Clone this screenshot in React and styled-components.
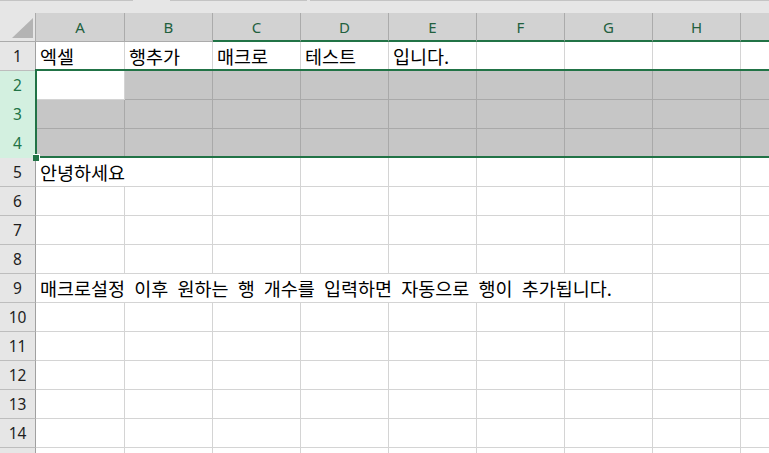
import React from "react";
import styled, { createGlobalStyle } from "styled-components";

const GREEN = "#217346";
const ROW_H = 29;
const HEAD_H = 29;

const Global = createGlobalStyle`
  html, body { margin: 0; padding: 0; background: #ffffff; }
  body { width: 769px; height: 453px; overflow: hidden; }
  #root { width: 769px; height: 453px; overflow: hidden; }
`;

const Page = styled.div`
  width: 769px;
  height: 453px;
  overflow: hidden;
  background: #ffffff;
  display: flex;
  flex-direction: column;
`;

const TopStrip = styled.div`
  height: 13px;
  flex: 0 0 13px;
  background: #e6e6e6;
  display: flex;
  align-items: flex-start;
`;

const StripEdge = styled.div`
  height: 0;
  border-top: 1px solid #c4c4c4;
  width: ${(p) => (p.$w ? `${p.$w}px` : "auto")};
  flex: ${(p) => (p.$w ? "0 0 auto" : "1 1 auto")};
  margin-left: ${(p) => p.$gap || 0}px;
`;

const Sheet = styled.div`
  position: relative;
  display: grid;
  grid-template-columns: 36px 89px repeat(7, 88px) 88px;
  grid-template-rows: ${HEAD_H}px;
  grid-auto-rows: ${ROW_H}px;
  font-family: "Noto Sans CJK KR", "Noto Sans", sans-serif;
`;

const Corner = styled.div`
  position: relative;
  box-sizing: border-box;
  background: #e6e6e6;
  border-right: 1px solid #ababab;
  border-bottom: 1px solid #ababab;
`;

const CornerMark = styled.svg`
  position: absolute;
  left: 12px;
  top: 5px;
`;

const ColHead = styled.div`
  box-sizing: border-box;
  background: #d2d2d2;
  border-right: 1px solid #ababab;
  border-bottom: ${(p) => (p.$accent ? `2px solid ${GREEN}` : "1px solid #ababab")};
  display: flex;
  align-items: center;
  justify-content: center;
  padding-top: ${(p) => (p.$accent ? "1px" : "0")};
  font-family: "Noto Sans", "Open Sans", sans-serif;
  font-size: 15px;
  color: #22603e;
`;

const RowHead = styled.div`
  box-sizing: border-box;
  background: ${(p) => (p.$sel ? "#d3f0e0" : "#e6e6e6")};
  border-right: 1px solid #a0a0a0;
  border-bottom: 1px solid ${(p) => (p.$sel ? "#d3f0e0" : "#bdbdbd")};
  display: flex;
  align-items: center;
  justify-content: center;
  font-family: "Noto Sans", "Open Sans", sans-serif;
  font-size: 15.5px;
  color: ${(p) => (p.$sel ? GREEN : "#1e1e1e")};
`;

const Cell = styled.div`
  box-sizing: border-box;
  grid-column: span ${(p) => p.$span || 1};
  background: ${(p) => (p.$sel ? "#c6c6c6" : "#ffffff")};
  border-right: 1px solid ${(p) => (p.$sel ? "#a9a9a9" : "#d4d4d4")};
  border-bottom: 1px solid ${(p) => (p.$sel ? "#a9a9a9" : "#d4d4d4")};
  display: flex;
  align-items: center;
  padding: 0 0 0 4px;
  white-space: nowrap;
  overflow: visible;
  font-family: "Noto Sans CJK KR", "Noto Sans", sans-serif;
  font-size: 18.5px;
  word-spacing: 5px;
  color: #000000;
`;

const Selection = styled.div`
  position: absolute;
  left: 35px;
  top: ${HEAD_H + ROW_H - 2}px;
  right: -20px;
  height: ${ROW_H * 3 + 2}px;
  box-sizing: border-box;
  border: 2px solid ${GREEN};
  pointer-events: none;
`;

const FillHandle = styled.div`
  position: absolute;
  left: 33px;
  top: ${HEAD_H + ROW_H * 4 - 4}px;
  width: 7px;
  height: 7px;
  box-sizing: border-box;
  background: ${GREEN};
  border-top: 1px solid #ffffff;
  border-right: 1px solid #ffffff;
  pointer-events: none;
`;

const COLS = ["A", "B", "C", "D", "E", "F", "G", "H", ""];
const ACCENT_FROM = 2;

const ROWS = [
  { n: 1, cells: [{ t: "엑셀" }, { t: "행추가" }, { t: "매크로" }, { t: "테스트" }, { t: "입니다." }] },
  { n: 2, sel: true },
  { n: 3, sel: true },
  { n: 4, sel: true },
  { n: 5, cells: [{ t: "안녕하세요", span: 2 }] },
  { n: 6 },
  { n: 7 },
  { n: 8 },
  {
    n: 9,
    cells: [{ t: "매크로설정 이후 원하는 행 개수를 입력하면 자동으로 행이 추가됩니다.", span: 7 }],
  },
  { n: 10 },
  { n: 11 },
  { n: 12 },
  { n: 13 },
  { n: 14 },
  { n: 15, hideNum: true },
];

function buildCells(row) {
  const out = [];
  const given = row.cells || [];
  let col = 0;
  given.forEach((c, i) => {
    out.push(
      <Cell key={`c${i}`} $span={c.span}>
        {c.t}
      </Cell>
    );
    col += c.span || 1;
  });
  while (col < COLS.length) {
    const sel = row.sel && !(row.n === 2 && col === 0);
    out.push(<Cell key={`e${col}`} $sel={sel} />);
    col += 1;
  }
  return out;
}

export default function App() {
  return (
    <Page>
      <Global />
      <TopStrip>
        <StripEdge $w={133} />
        <StripEdge $w={137} $gap={37} />
        <StripEdge $gap={3} />
      </TopStrip>
      <Sheet>
        <Corner>
          <CornerMark width="22" height="20" viewBox="0 0 22 20">
            <polygon points="0,20 21,20 21,0" fill="#b4b4b4" />
          </CornerMark>
        </Corner>
        {COLS.map((c, i) => (
          <ColHead key={`h${i}`} $accent={i >= ACCENT_FROM}>
            {c}
          </ColHead>
        ))}
        {ROWS.map((row) => (
          <React.Fragment key={row.n}>
            <RowHead $sel={row.sel}>{row.hideNum ? "" : row.n}</RowHead>
            {buildCells(row)}
          </React.Fragment>
        ))}
        <Selection />
        <FillHandle />
      </Sheet>
    </Page>
  );
}
